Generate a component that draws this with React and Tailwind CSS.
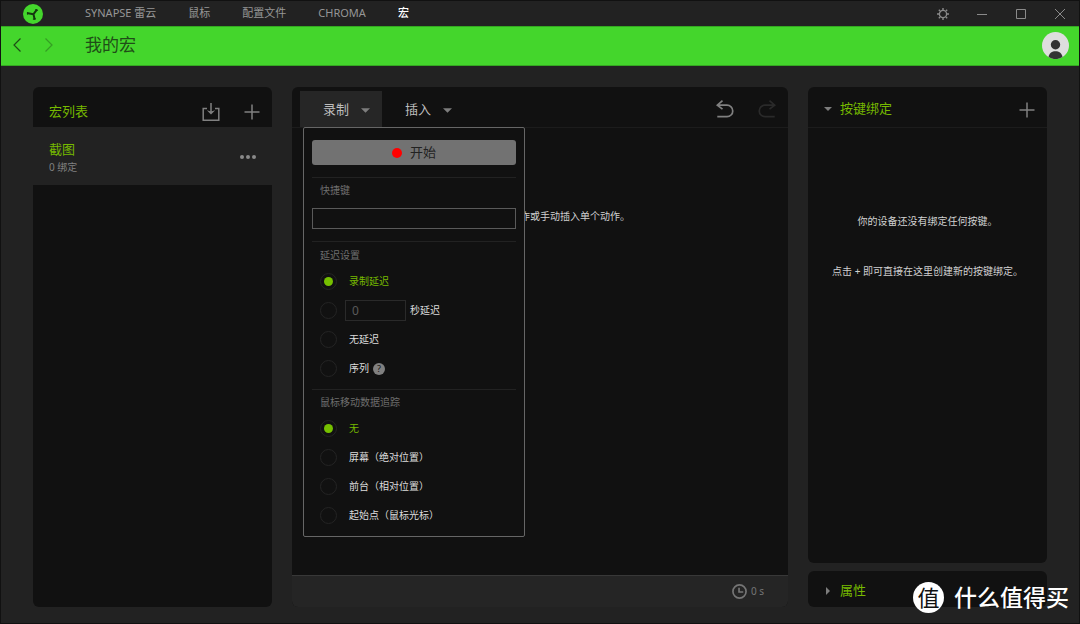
import { useState } from "react";
import { clsx } from "clsx";

const navItems = [
  { label: "SYNAPSE 雷云", href: "#synapse" },
  { label: "鼠标", href: "#mouse" },
  { label: "配置文件", href: "#profiles" },
  { label: "CHROMA", href: "#chroma" },
  { label: "宏", href: "#macro", active: true },
];

const trackingOptions = [
  { value: "none", label: "无" },
  { value: "screen", label: "屏幕（绝对位置）" },
  { value: "foreground", label: "前台（相对位置）" },
  { value: "origin", label: "起始点（鼠标光标）" },
];

function Logo() {
  return (
    <svg viewBox="0 0 20 20" className="size-5 shrink-0">
      <circle cx="10" cy="10" r="10" fill="#44d62c" />
      <g fill="none" stroke="#14380f" strokeLinecap="round">
        <path d="M10.5 10.2 5 9.200M10.500 10.200l3-4M10.500 10.200l1 4.600" strokeWidth="2" />
        <path d="M4.500 8.600v1.500M12.800 5.600l1.700.6M10.400 15.200l2-.4" strokeWidth="1.2" />
      </g>
    </svg>
  );
}

function GearIcon() {
  return (
    <svg viewBox="0 0 12 12" className="size-3" fill="none" stroke="currentColor">
      <circle cx="6" cy="6" r="3.6" strokeWidth="1.3" />
      <path d="M6 0v2M6 10v2M0 6h2M10 6h2M1.800 1.800l1.300 1.300M8.900 8.900l1.300 1.300M1.800 10.200l1.300-1.300M8.900 3.100l1.300-1.300" strokeWidth="1.4" />
    </svg>
  );
}

function PlusIcon() {
  return (
    <svg viewBox="0 0 16 16" className="size-4" fill="none" stroke="currentColor" strokeWidth="1.5">
      <path d="M8 .5v15M.5 8h15" />
    </svg>
  );
}

function ImportIcon() {
  return (
    <svg viewBox="0 0 18 18" className="size-[18px]" fill="none" stroke="currentColor" strokeWidth="1.5">
      <path d="M5 5.500H1.200v11.700h15.600V5.500H13M9 0v9" />
      <path d="M4.800 7.200 9 11.600l4.200-4.400L9 8.500z" fill="currentColor" stroke="none" />
    </svg>
  );
}

function UndoIcon() {
  return (
    <svg viewBox="0 0 18 18" className="size-[18px]" fill="none" stroke="currentColor" strokeWidth="1.7">
      <path d="M6.500.7 1.300 5.200l5.200 4M1.500 5.200H11a5.600 5.600 0 0 1 0 11.500H1.300" />
    </svg>
  );
}

function Caret({ className }) {
  return (
    <svg viewBox="0 0 10 5" className={clsx("fill-[#7d7d7d]", className)}>
      <path d="M0 0h10L5 5z" />
    </svg>
  );
}

function TitleBar() {
  return (
    <header className="flex h-[25px] items-center bg-[#222] pl-[22px]">
      <Logo />
      <nav className="ml-[42px] flex flex-1 gap-8 text-[11px]">
        {navItems.map(({ label, href, active }) => (
          <a key={href} href={href} className={active ? "font-medium text-white" : "text-[#969696]"}>
            {label}
          </a>
        ))}
      </nav>
      <div className="flex text-[#8a8a8a]">
        <button aria-label="设置" className="grid w-[39px] place-items-center"><GearIcon /></button>
        <button aria-label="最小化" className="grid w-[39px] place-items-center">
          <svg viewBox="0 0 10 10" className="size-2.5" stroke="currentColor"><path d="M0 5.5h10" /></svg>
        </button>
        <button aria-label="最大化" className="grid w-[39px] place-items-center">
          <svg viewBox="0 0 10 10" className="size-2.5" fill="none" stroke="currentColor"><path d="M.5.5h9v9h-9z" /></svg>
        </button>
        <button aria-label="关闭" className="grid w-[39px] place-items-center">
          <svg viewBox="0 0 10 10" className="size-2.5" stroke="currentColor"><path d="m0 0 10 10M10 0 0 10" /></svg>
        </button>
      </div>
    </header>
  );
}

function PageBar() {
  return (
    <div className="flex h-10 items-center border-y border-y-[#35a822] bg-[#44d62c] pr-2.5 pb-0.5 pl-3 text-[#1f4d17]">
      <button aria-label="后退">
        <svg viewBox="0 0 8 14" className="h-3.5 w-2" fill="none" stroke="currentColor" strokeWidth="1.2"><path d="M7.5.5 1 7l6.500 6.500" /></svg>
      </button>
      <button aria-label="前进" className="ml-6 opacity-40">
        <svg viewBox="0 0 8 14" className="h-3.5 w-2" fill="none" stroke="currentColor" strokeWidth="1.2"><path d="M.5.500 7 7 .5 13.500" /></svg>
      </button>
      <h1 className="ml-8 flex-1 text-[17px] leading-6">我的宏</h1>
      <button aria-label="账户">
        <svg viewBox="0 0 27 27" className="size-[27px]">
          <circle cx="13.5" cy="13.5" r="13.5" fill="#dedede" />
          <circle cx="13.5" cy="12.7" r="4.7" fill="#333" />
          <path d="M6.500 25c1-4.300 3.500-5.800 7-5.800s6 1.500 7 5.800a13.500 13.500 0 0 1-14 0z" fill="#333" />
        </svg>
      </button>
    </div>
  );
}

function MacroList() {
  return (
    <section className="flex flex-col overflow-hidden rounded-md bg-[#111]">
      <div className="flex h-10 items-center gap-6 pt-2.5 pr-3 pl-4 text-[#808080]">
        <h2 className="flex-1 text-[13px] text-[#76b900]">宏列表</h2>
        <button aria-label="导入"><ImportIcon /></button>
        <button aria-label="新建宏"><PlusIcon /></button>
      </div>
      <div className="flex h-[58px] items-center bg-[#222] px-4 pt-0.5">
        <div className="flex-1">
          <p className="text-[13px] leading-5 text-[#76b900]">截图</p>
          <p className="text-[10px] leading-4 text-[#808080]">0 绑定</p>
        </div>
        <button aria-label="更多" className="flex gap-0.5">
          <span className="size-1 rounded-full bg-[#8a8a8a]" />
          <span className="size-1 rounded-full bg-[#8a8a8a]" />
          <span className="size-1 rounded-full bg-[#8a8a8a]" />
        </button>
      </div>
    </section>
  );
}

function RadioRow({ id, name, value, current, onChange, children }) {
  return (
    <div className="flex h-[29px] items-center">
      <input
        type="radio"
        id={id}
        name={name}
        checked={current === value}
        onChange={() => onChange(value)}
        className="ml-2 size-[17px] appearance-none rounded-full border border-[#242424] bg-clip-content p-[3px] checked:bg-[#76c000]"
      />
      {children}
    </div>
  );
}

function RadioLabel({ id, active, className, children }) {
  return (
    <label htmlFor={id} className={clsx("text-[10px]", active ? "text-[#76b900]" : "text-[#dcdcdc]", className)}>
      {children}
    </label>
  );
}

function RecordMenu() {
  const [delay, setDelay] = useState("record");
  const [tracking, setTracking] = useState("none");

  return (
    <div className="absolute top-full left-[3px] z-10 w-[222px] rounded-xs border border-[#666] bg-[#111] px-2 pt-3 pb-1.5">
      <button className="flex h-[25px] w-full items-center justify-center gap-2 rounded-[3px] bg-[#727272] text-[13px] text-[#222]">
        <span className="size-2.5 rounded-full bg-[#f00]" />
        开始
      </button>

      <div className="mt-3 border-t border-[#222] pt-1">
        <label htmlFor="hotkey" className="block pl-2 text-[10px] leading-4 text-[#6e6e6e]">快捷键</label>
        <input id="hotkey" className="mt-2.5 block h-[21px] w-full border border-[#5a5a5a] px-2 text-[10px] text-[#dcdcdc]" />
      </div>

      <div role="radiogroup" aria-labelledby="delay-title" className="mt-3 border-t border-[#222] pt-[5px] pb-1.5">
        <h3 id="delay-title" className="mb-1 pl-2 text-[10px] leading-4 text-[#6e6e6e]">延迟设置</h3>
        <RadioRow id="delay-record" name="delay" value="record" current={delay} onChange={setDelay}>
          <RadioLabel id="delay-record" active={delay === "record"} className="ml-3">录制延迟</RadioLabel>
        </RadioRow>
        <RadioRow id="delay-fixed" name="delay" value="fixed" current={delay} onChange={setDelay}>
          <input
            aria-label="延迟秒数"
            placeholder="0"
            className="mr-1 ml-2 h-[21px] w-[61px] border border-[#2a2a2a] px-1.5 text-[12px] placeholder:text-[#5a5a5a]"
          />
          <RadioLabel id="delay-fixed" active={delay === "fixed"}>秒延迟</RadioLabel>
        </RadioRow>
        <RadioRow id="delay-zero" name="delay" value="zero" current={delay} onChange={setDelay}>
          <RadioLabel id="delay-zero" active={delay === "zero"} className="ml-3">无延迟</RadioLabel>
        </RadioRow>
        <RadioRow id="delay-sequence" name="delay" value="sequence" current={delay} onChange={setDelay}>
          <RadioLabel id="delay-sequence" active={delay === "sequence"} className="ml-3">序列</RadioLabel>
          <button className="ml-1 grid size-3 place-items-center rounded-full bg-[#808080] text-[9px] leading-3 text-[#111]">?</button>
        </RadioRow>
      </div>

      <div role="radiogroup" aria-labelledby="tracking-title" className="border-t border-[#222] pt-1">
        <h3 id="tracking-title" className="mb-1 pl-2 text-[10px] leading-4 text-[#6e6e6e]">鼠标移动数据追踪</h3>
        {trackingOptions.map(({ value, label }) => (
          <RadioRow key={value} id={`track-${value}`} name="tracking" value={value} current={tracking} onChange={setTracking}>
            <RadioLabel id={`track-${value}`} active={tracking === value} className="ml-3">{label}</RadioLabel>
          </RadioRow>
        ))}
      </div>
    </div>
  );
}

function Editor() {
  return (
    <section className="flex flex-col rounded-md bg-[#111]">
      <div className="flex h-[41px] items-end border-b border-[#1c1c1c] pr-3 pl-2">
        <div className="relative">
          <button className="flex h-9 w-[82px] items-center gap-3 bg-[#262626] pt-0.5 pl-[23px] text-[13px] text-[#bdbdbd]">
            录制
            <Caret className="h-[5px] w-[9px]" />
          </button>
          <RecordMenu />
        </div>
        <button className="flex h-9 w-[82px] items-center gap-3 pt-0.5 pl-[23px] text-[13px] text-[#bdbdbd]">
          插入
          <Caret className="h-[5px] w-[9px]" />
        </button>
        <div className="ml-auto flex h-9 items-center gap-6">
          <button aria-label="撤销" className="text-[#808080]"><UndoIcon /></button>
          <button aria-label="重做" className="-scale-x-100 text-[#2a2a2a]"><UndoIcon /></button>
        </div>
      </div>
      <p className="flex-1 pt-20 text-center text-[10px] leading-4 text-[#d0d0d0]">请录制一系列动作或手动插入单个动作。</p>
      <div className="flex h-8 items-center justify-end gap-1 rounded-b-md border-t border-[#383838] bg-[#252525] pr-6 text-[10px] text-[#757575]">
        <svg viewBox="0 0 16 16" className="size-[15px]" fill="none" stroke="currentColor" strokeWidth="1.8">
          <circle cx="8" cy="8" r="7" />
          <path d="M7.500 4v4.500H12" />
        </svg>
        0 s
      </div>
    </section>
  );
}

function Bindings() {
  return (
    <div className="flex flex-col gap-2">
      <section className="flex-1 rounded-md bg-[#111]">
        <div className="flex h-[41px] items-center border-b border-[#1c1c1c] pt-1 pr-3 pl-4">
          <button className="flex flex-1 items-center gap-2 text-[13px] text-[#76b900]">
            <Caret className="h-1 w-2" />
            按键绑定
          </button>
          <button aria-label="添加绑定" className="pt-0.5 text-[#808080]"><PlusIcon /></button>
        </div>
        <div className="pt-[85px] text-center text-[10px] leading-4 text-[#d0d0d0]">
          <p>你的设备还没有绑定任何按键。</p>
          <p className="mt-[34px]">点击 + 即可直接在这里创建新的按键绑定。</p>
        </div>
      </section>
      <section className="rounded-md bg-[#111]">
        <button className="flex h-9 w-full items-center gap-2 pt-1 pl-4 text-[13px] text-[#76b900]">
          <Caret className="h-1 w-2 -rotate-90" />
          属性
        </button>
      </section>
    </div>
  );
}

export default function App() {
  return (
    <div className="relative flex min-h-screen flex-col border border-[#111] bg-[#222] font-['Noto_Sans','Noto_Sans_CJK_SC',sans-serif]">
      <TitleBar />
      <PageBar />
      <main className="grid flex-1 grid-cols-[239px_1fr_239px] gap-5 px-8 pt-[21px] pb-4">
        <MacroList />
        <Editor />
        <Bindings />
      </main>

      {/* Site badge */}
      <div className="absolute right-2.5 bottom-2.5 flex items-center gap-2.5 text-white">
        <span className="grid size-[31px] place-items-center rounded-full bg-white text-[22px] leading-7 text-[#111]">值</span>
        <span className="text-[23px] leading-8 font-medium">什么值得买</span>
      </div>
    </div>
  );
}
